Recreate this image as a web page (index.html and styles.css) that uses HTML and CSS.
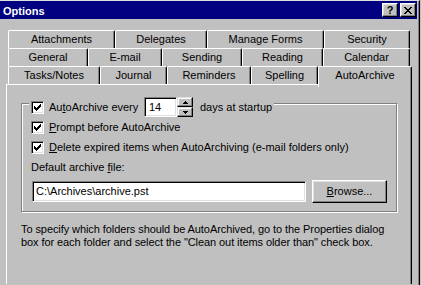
FILE: index.html
```html
<!DOCTYPE html>
<html>
<head>
<meta charset="utf-8">
<title>Options</title>
<link rel="stylesheet" href="styles.css">
</head>
<body>
<div class="window">
  <div class="titlebar">
    <span class="title">Options</span>
    <span class="caption-btns">
      <span class="cap help">?</span>
      <span class="cap close">
        <svg width="8" height="7" viewBox="0 0 8 7" shape-rendering="crispEdges"><path d="M0 0h2v1h-2zM6 0h2v1h-2zM1 1h2v1h-2zM5 1h2v1h-2zM2 2h4v1h-4zM3 3h2v1h-2zM2 4h4v1h-4zM1 5h2v1h-2zM5 5h2v1h-2zM0 6h2v1h-2zM6 6h2v1h-2z" fill="#000"/></svg>
      </span>
    </span>
  </div>
  <div class="client">
    <div class="tabs">
      <div class="tab-row r1">
        <div class="tab">Attachments</div>
        <div class="tab">Delegates</div>
        <div class="tab">Manage Forms</div>
        <div class="tab">Security</div>
      </div>
      <div class="tab-row r2">
        <div class="tab">General</div>
        <div class="tab">E-mail</div>
        <div class="tab">Sending</div>
        <div class="tab">Reading</div>
        <div class="tab">Calendar</div>
      </div>
      <div class="tab-row r3">
        <div class="tab">Tasks/Notes</div>
        <div class="tab">Journal</div>
        <div class="tab">Reminders</div>
        <div class="tab">Spelling</div>
        <div class="tab sel">AutoArchive</div>
      </div>
    </div>
    <div class="panel">
      <div class="group">
        <div class="legend">
          <span class="cb"><svg width="9" height="9" viewBox="0 0 9 9" shape-rendering="crispEdges"><path d="M1 3h1v3h-1zM2 4h1v3h-1zM3 5h1v3h-1zM4 4h1v3h-1zM5 3h1v3h-1zM6 2h1v3h-1zM7 1h1v3h-1z" fill="#000"/></svg></span>
          <span class="lbl-every">Au<u>t</u>oArchive every</span>
          <span class="spin-edit">14</span>
          <span class="spin">
            <span class="spin-btn"><svg width="5" height="3" viewBox="0 0 5 3" shape-rendering="crispEdges"><path d="M2 0h1v1h-1zM1 1h3v1h-3zM0 2h5v1h-5z" fill="#000"/></svg></span>
            <span class="spin-btn"><svg width="5" height="3" viewBox="0 0 5 3" shape-rendering="crispEdges"><path d="M0 0h5v1h-5zM1 1h3v1h-3zM2 2h1v1h-1z" fill="#000"/></svg></span>
          </span>
          <span class="lbl-days">days at startup</span>
        </div>
        <div class="opt">
          <span class="cb"><svg width="9" height="9" viewBox="0 0 9 9" shape-rendering="crispEdges"><path d="M1 3h1v3h-1zM2 4h1v3h-1zM3 5h1v3h-1zM4 4h1v3h-1zM5 3h1v3h-1zM6 2h1v3h-1zM7 1h1v3h-1z" fill="#000"/></svg></span>
          <span><u>P</u>rompt before AutoArchive</span>
        </div>
        <div class="opt">
          <span class="cb"><svg width="9" height="9" viewBox="0 0 9 9" shape-rendering="crispEdges"><path d="M1 3h1v3h-1zM2 4h1v3h-1zM3 5h1v3h-1zM4 4h1v3h-1zM5 3h1v3h-1zM6 2h1v3h-1zM7 1h1v3h-1z" fill="#000"/></svg></span>
          <span><u>D</u>elete expired items when AutoArchiving (e-mail folders only)</span>
        </div>
        <div class="lbl-row">Default archive <u>f</u>ile:</div>
        <div class="file-row">
          <span class="textbox">C:\Archives\archive.pst</span>
          <span class="btn"><u>B</u>rowse...</span>
        </div>
      </div>
      <p class="desc">To specify which folders should be AutoArchived, go to the Properties dialog<br>box for each folder and select the "Clean out items older than" check box.</p>
    </div>
  </div>
</div>
</body>
</html>
```

FILE: styles.css
```css
* { box-sizing: border-box; }

html, body {
  margin: 0;
  background: #c0c0c0;
}

body {
  width: 421px;
  height: 285px;
  overflow: hidden;
  font-family: "Liberation Sans", Arial, sans-serif;
  font-size: 11px;
  color: #000;
}

.window {
  width: 420px;
  height: 285px;
  overflow: hidden;
  background: #c0c0c0;
  border-top: 1px solid #dfdfdf;
  border-right: 1px solid #000;
  box-shadow: inset -1px 0 #808080;
  padding-right: 2px;
}

.titlebar {
  height: 18px;
  background: #000080;
  color: #fff;
  display: flex;
  align-items: center;
  justify-content: space-between;
  padding: 0 1px 0 3px;
}

.title {
  font-weight: bold;
  font-size: 11px;
  line-height: 18px;
  padding-top: 1px;
}

.caption-btns {
  display: flex;
  gap: 2px;
}

.cap {
  width: 16px;
  height: 14px;
  background: #c0c0c0;
  border: 1px solid;
  border-color: #fff #000 #000 #fff;
  box-shadow: inset -1px -1px #808080, inset 1px 1px #dfdfdf;
  display: flex;
  align-items: center;
  justify-content: center;
  color: #000;
  font-weight: bold;
  font-size: 11px;
  line-height: 12px;
}

.cap svg { display: block; }

.client {
  padding-top: 11px;
}

.tabs {
  display: flex;
  flex-direction: column;
  margin-left: 8px;
}

.tab-row {
  display: grid;
  height: 18px;
}

.r1 { grid-template-columns: 107px 92px 117px 86px; }
.r2 { grid-template-columns: 80px 74px 80px 81px 87px; }
.r3 { grid-template-columns: 92px 67px 84px 67px 94px; }

.tab {
  height: 18px;
  border-top: 1px solid #fff;
  border-left: 1px solid #fff;
  border-right: 1px solid #000;
  box-shadow: inset -1px 0 #808080;
  border-radius: 2px 2px 0 0;
  text-align: center;
  line-height: 17px;
  white-space: nowrap;
  background: #c0c0c0;
}

.tab.sel {
  align-self: end;
  height: 21px;
  margin-bottom: -1px;
  position: relative;
  z-index: 1;
}

.panel {
  margin-left: 6px;
  width: 406px;
  height: 200px;
  border-top: 1px solid #fff;
  border-left: 1px solid #fff;
  border-right: 1px solid #000;
  box-shadow: inset -1px 0 #808080;
  padding: 18px 0 0 14px;
}

.group {
  width: 376px;
  height: 109px;
  border: 1px solid #808080;
  box-shadow: 1px 1px 0 #fff, inset 1px 1px 0 #fff;
}

.legend {
  display: flex;
  align-items: center;
  width: fit-content;
  height: 20px;
  margin: -7px 0 0 7px;
  padding: 0 2px 0 2px;
  background: #c0c0c0;
}

.cb {
  flex: none;
  width: 13px;
  height: 13px;
  background: #fff;
  border: 1px solid;
  border-color: #808080 #fff #fff #808080;
  box-shadow: inset 1px 1px #000, inset -1px -1px #dfdfdf;
  margin-right: 5px;
  padding: 1px;
}

.cb svg { display: block; }

.lbl-every {
  width: 95px;
  white-space: nowrap;
}

.spin-edit {
  width: 33px;
  height: 20px;
  background: #fff;
  border: 1px solid;
  border-color: #808080 #fff #fff #808080;
  box-shadow: inset 1px 1px #000, inset -1px -1px #dfdfdf;
  padding-left: 4px;
  line-height: 18px;
}

.spin {
  display: flex;
  flex-direction: column;
  width: 16px;
  height: 20px;
}

.spin-btn {
  height: 10px;
  background: #c0c0c0;
  border: 1px solid;
  border-color: #dfdfdf #000 #000 #dfdfdf;
  box-shadow: inset -1px -1px #808080, inset 1px 1px #fff;
  display: flex;
  align-items: center;
  justify-content: center;
}

.spin-btn svg { display: block; }

.lbl-days {
  margin-left: 7px;
  white-space: nowrap;
}

.opt {
  display: flex;
  align-items: center;
  height: 20px;
  padding-left: 9px;
  white-space: nowrap;
}

.lbl-row {
  height: 20px;
  line-height: 20px;
  padding-left: 9px;
}

.file-row {
  display: flex;
  align-items: center;
  gap: 6px;
  margin-top: 3px;
  padding-left: 10px;
}

.textbox {
  width: 274px;
  height: 21px;
  background: #fff;
  border: 1px solid;
  border-color: #808080 #fff #fff #808080;
  box-shadow: inset 1px 1px #000, inset -1px -1px #dfdfdf;
  padding-left: 3px;
  line-height: 19px;
  white-space: nowrap;
}

.btn {
  width: 75px;
  height: 23px;
  background: #c0c0c0;
  border: 1px solid;
  border-color: #fff #000 #000 #fff;
  box-shadow: inset -1px -1px #808080, inset 1px 1px #dfdfdf;
  text-align: center;
  line-height: 21px;
}

.desc {
  margin: 11px 0 0 0;
  line-height: 13px;
  white-space: nowrap;
  letter-spacing: -0.08px;
}
```
